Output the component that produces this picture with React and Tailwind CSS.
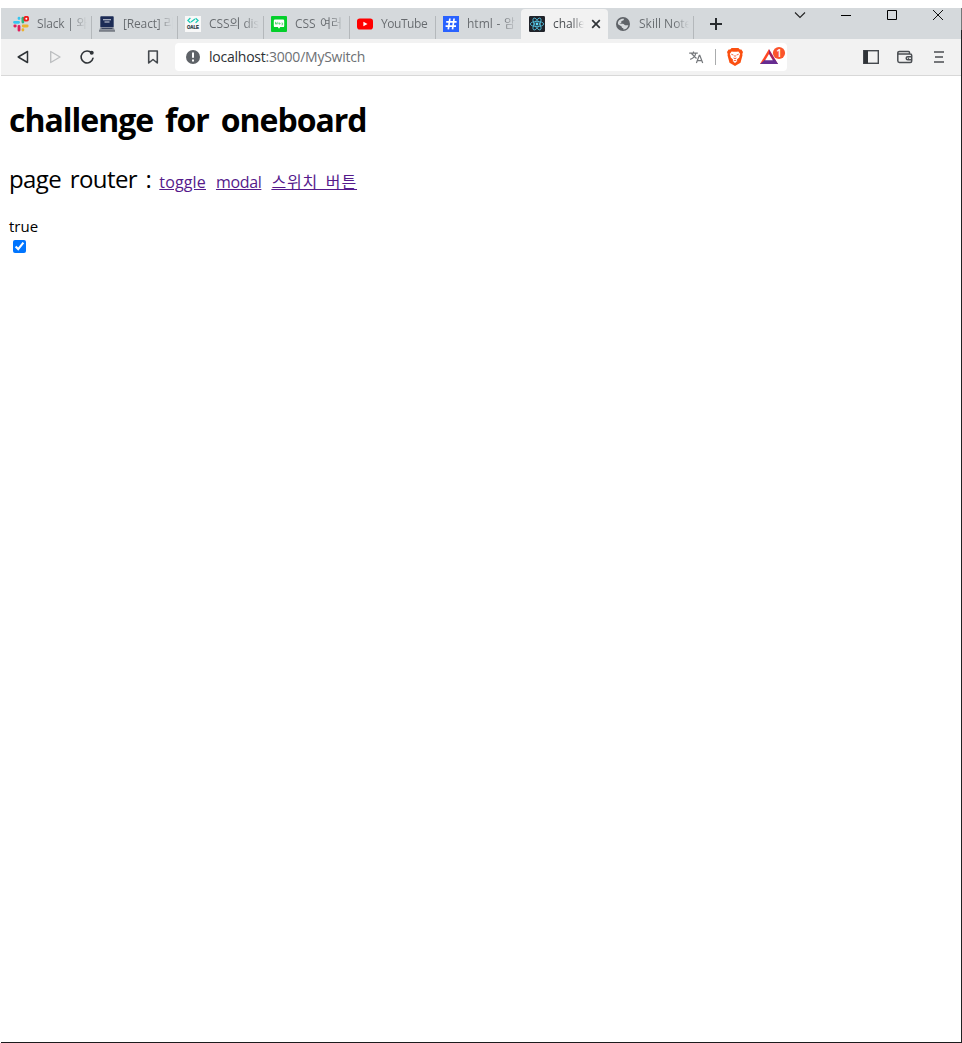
import React from "react";

function SlackIcon() {
  return (
    <svg className="block size-4" viewBox="0 0 16 16">
      <path d="M1.500 6.300H5.600M6 2.200v.4" stroke="#36c5f0" strokeWidth="2.800" strokeLinecap="round" />
      <path d="M9.900 2.200V6" stroke="#2eb67d" strokeWidth="2.800" strokeLinecap="round" />
      <path d="M10.200 10H14.200M9.900 13.700v.4" stroke="#ecb22e" strokeWidth="2.800" strokeLinecap="round" />
      <path d="M6 10.300V14.200M1.800 10h.5" stroke="#e01e5a" strokeWidth="2.800" strokeLinecap="round" />
      <circle cx="13.300" cy="2.700" r="2.900" fill="#ee1c1c" />
      <circle cx="13.300" cy="2.700" r="1" fill="#fff" />
    </svg>
  );
}

function LaptopIcon() {
  return (
    <svg className="block size-4" viewBox="0 0 16 16">
      <rect x="1.300" y="0.300" width="13.400" height="11.200" rx="0.800" fill="#1c2b55" />
      <path d="M4 3.800h8M5.500 6h5" stroke="#d5d9e4" strokeWidth="1.100" />
      <path d="M1.300 11.500h13.400L16 14.500H0z" fill="#8f949d" />
      <path d="M0 14.500h16v1H0z" fill="#414753" />
      <path d="M2.500 12.500h11" stroke="#3d465f" strokeWidth="1" />
    </svg>
  );
}

function OaleIcon() {
  return (
    <svg className="block size-4" viewBox="0 0 16 16">
      <rect width="16" height="16" fill="#f8f8f8" />
      <path d="M5.400 2 2.900 4.400l2.500 2.300M10.600 2.200l2.500 2.300-2.500 2.300M6 6l4-3" fill="none" stroke="#19c9b3" strokeWidth="1.200" />
      <text x="2" y="12.700" textLength="12" lengthAdjust="spacingAndGlyphs" fontFamily="Liberation Sans" fontWeight="700" fontSize="4.800" fill="#172d35" stroke="#172d35" strokeWidth=".2">OALE</text>
    </svg>
  );
}

function BlogIcon() {
  return (
    <svg className="block size-4" viewBox="0 0 16 16">
      <rect width="16" height="16" rx="1" fill="#04cf2b" />
      <path d="M4 3.500h8q1.200 0 1.200 1.200v5.200q0 1.200-1.200 1.200H9.200L8 12.700l-1.200-1.600H4q-1.200 0-1.200-1.200V4.700q0-1.200 1.200-1.200Z" fill="#fff" />
      <path d="M4.500 5.800v2.300h1.200V7H4.500M6.800 5.800v2.500M8 7h1.100v1.100H8zM10.400 7h1.200v1.900h-1.200" fill="none" stroke="#38cf59" strokeWidth=".7" />
    </svg>
  );
}

function YouTubeIcon() {
  return (
    <svg className="block size-4" viewBox="0 0 16 16">
      <rect y="2.400" width="16" height="11.200" rx="2.800" fill="#f00" />
      <path d="m6.400 5.700 4.100 2.300-4.100 2.300z" fill="#fff" />
    </svg>
  );
}

function HashIcon() {
  return (
    <svg className="block size-4" viewBox="0 0 16 16">
      <rect width="16" height="16" fill="#2962ff" />
      <path d="M6.900 2.500 5.300 13.300M11.100 2.500 9.500 13.300M3.200 5.800h10.400M2.600 10.100H13" stroke="#fff" strokeWidth="1.700" />
    </svg>
  );
}

function ReactIcon() {
  return (
    <svg className="block size-4" viewBox="0 0 16 16">
      <rect width="16" height="16" rx="1.200" fill="#20232a" />
      <g fill="none" stroke="#51bddb" strokeWidth=".85">
        <ellipse cx="8" cy="8" rx="6.700" ry="2.600" />
        <ellipse cx="8" cy="8" rx="6.700" ry="2.600" transform="rotate(60 8 8)" />
        <ellipse cx="8" cy="8" rx="6.700" ry="2.600" transform="rotate(120 8 8)" />
      </g>
      <circle cx="8" cy="8" r="1.400" fill="#61dafb" />
    </svg>
  );
}

function GlobeIcon() {
  return (
    <svg className="block size-4" viewBox="0 0 16 16">
      <circle cx="8" cy="8" r="7" fill="#5f6368" />
      <path d="M9 2.800c-.2 1.300-.5 1.800-1.700 2-1 .2-1 .8-1 1.700 0 .8-1.400.5-1.700 1.300h3.200c1.500 0 1.400 1.400 2.600 1.500h2.900c-.4 2.600-2.500 4.300-5 4.300v-1.500c-1.200 0-1.600-.7-1.600-1.700L3 8.200C2.500 4.800 5.300 2.300 9 2.800Z" fill="#d5d9dc" />
    </svg>
  );
}

const tabs = [
  { title: "Slack | 와", icon: SlackIcon, spacing: "tracking-[-0.2px]" },
  { title: "[React] 리", icon: LaptopIcon, spacing: "tracking-[-0.15px]" },
  { title: "CSS의 dis", icon: OaleIcon, spacing: "tracking-[-0.1px]" },
  { title: "CSS 여러", icon: BlogIcon, spacing: "tracking-[-0.1px] [word-spacing:1.5px]" },
  { title: "YouTube", icon: YouTubeIcon, spacing: "tracking-[-0.45px]", whole: true },
  { title: "html - 암", icon: HashIcon, spacing: "tracking-[0px] [word-spacing:0.6px]", beforeActive: true },
  { title: "challenge", icon: ReactIcon, active: true },
  { title: "Skill Note", icon: GlobeIcon, spacing: "tracking-[0px]" },
];

function Tab({ tab }) {
  const Icon = tab.icon;
  if (tab.active) {
    return (
      <div className="mt-px flex h-[30px] w-[87px] shrink-0 items-center rounded-t bg-[#f2f2f2] pl-2">
        <Icon />
        <span className="ml-2 w-[31px] overflow-hidden whitespace-nowrap bg-gradient-to-r from-[#45494d] from-60% to-[#f2f2f2] bg-clip-text text-[12px] leading-[18px] tracking-[-0.1px] text-transparent">{tab.title}</span>
        <svg className="ml-1 block size-4" viewBox="0 0 16 16"><path d="m4.200 4.200 7.600 7.600m0-7.600-7.600 7.600" stroke="#303438" strokeWidth="1.700" /></svg>
      </div>
    );
  }
  return (
    <div className={`flex h-[31px] shrink-0 items-center pl-[7px] ${tab.beforeActive ? "w-[85px]" : "w-[86px]"}`}>
      <Icon />
      <span className={`ml-2 w-[50px] overflow-hidden whitespace-nowrap bg-clip-text text-[12px] leading-[18px] text-transparent ${tab.spacing} ${tab.whole ? "bg-[#666a6e]" : "bg-gradient-to-r from-[#666a6e] from-70% to-[#d5d9dc]"}`}>{tab.title}</span>
      {!tab.beforeActive && <span className="ml-auto mt-2 h-[23px] w-px bg-[#b4b8bb]" />}
    </div>
  );
}

function TabStrip() {
  return (
    <div className="flex h-[31px] shrink-0 bg-[#d5d9dc] pl-[5px]">
      {tabs.map((tab) => <Tab key={tab.title} tab={tab} />)}
      <svg className="ml-3.5 mt-2 block size-4" viewBox="0 0 16 16"><path d="M8 2v12M2 8h12" stroke="#282c2f" strokeWidth="2" /></svg>
      <div className="ml-auto mr-[15px] flex gap-[30px]">
        <svg className="block size-4" viewBox="0 0 16 16"><path d="m3 4.500 5 5 5-5" fill="none" stroke="#222" strokeWidth="1.100" /></svg>
        <svg className="block size-4" viewBox="0 0 16 16"><path d="M3 7.500h10" stroke="#000" /></svg>
        <svg className="block size-4" viewBox="0 0 16 16"><path d="M3.500 2.500h9v9h-9z" fill="none" stroke="#000" /></svg>
        <svg className="block size-4" viewBox="0 0 16 16"><path d="m3 2 10 10m0-10L3 12" stroke="#111" /></svg>
      </div>
    </div>
  );
}

function LionIcon() {
  return (
    <svg className="block h-[18px] w-4" viewBox="0 0 16 18">
      <path d="M4.600 0h6.800l1.500 1.500 1.500-.1L16 4l-.7 2 .2 1.300-2 7.500L8 18l-5.500-3.200-2-7.500L.7 6 0 4l1.600-2.600 1.500.1z" fill="#fb4f10" />
      <path d="m4.600 3.500 1.800.3h3.200l1.800-.3 1.800 2.500-.8 2v1.200l-2.400 2.200.2 1.800L8 15l-2.200-1.800.2-1.800-2.400-2.200V8l-.8-2z" fill="#fff" />
      <path d="m4.300 6.200 2.200.9M11.700 6.200l-2.200.9M8 7v2.300M6.500 10l1.500.8 1.500-.8M6.500 13l1.500-.8 1.500.8" fill="none" stroke="#fb542b" strokeWidth=".9" />
    </svg>
  );
}

function RewardsIcon() {
  return (
    <svg className="block h-5 w-[26px]" viewBox="0 0 26 20">
      <path d="M9 3 0 18h5l4-7z" fill="#ff4724" />
      <path d="m9 3 9 15h-5L9 11z" fill="#9e1f63" />
      <path d="M0 18h18l-3-4.200H5z" fill="#662d91" />
      <path d="m9 8-3.800 6.200h7.600z" fill="#fff" />
      <circle cx="19" cy="7" r="6.100" fill="#fb542b" />
      <text x="19" y="10.700" textAnchor="middle" fontFamily="Open Sans" fontWeight="600" fontSize="10" fill="#fff">1</text>
    </svg>
  );
}

function Toolbar() {
  return (
    <div className="flex h-[37px] shrink-0 items-center border-b border-[#d8d8d8] bg-[#f2f2f2]">
      <svg className="ml-[14px] block size-4" viewBox="0 0 16 16"><path d="M12.500 2.500v11L3.200 8z" fill="none" stroke="#303438" strokeWidth="1.500" strokeLinejoin="round" /></svg>
      <svg className="ml-4 block size-4" viewBox="0 0 16 16"><path d="M3.700 2.500v11L13 8z" fill="none" stroke="#bdbfc1" strokeWidth="1.400" strokeLinejoin="round" /></svg>
      <svg className="ml-4 block size-4" viewBox="0 0 16 16"><path d="M12.700 4.100A6 6 0 1 0 14 9.200" fill="none" stroke="#303438" strokeWidth="1.600" strokeLinecap="round" /><circle cx="12.700" cy="3.800" r="2" fill="#303438" /></svg>
      <svg className="ml-[50px] block size-4" viewBox="0 0 16 16"><path d="M3.700 2h8.600v12L8 10.500 3.700 14z" fill="none" stroke="#45494e" strokeWidth="1.600" strokeLinejoin="round" /></svg>
      <div className="ml-[14px] flex h-7 w-[612px] items-center rounded bg-white">
        <svg className="ml-[10px] block size-4" viewBox="0 0 16 16"><circle cx="8" cy="8" r="7" fill="#5f6368" /><path d="M8 3.500v5.300m0 1.600v2" stroke="#fff" strokeWidth="2" /></svg>
        <span className="ml-2 whitespace-nowrap text-[14px] leading-5 tracking-[-0.23px] text-[#6d7074]"><span className="text-[#2c3034]">localhost</span>:3000/MySwitch</span>
        <svg className="ml-auto block size-4" viewBox="0 0 16 16">
          <path d="M1.200 4.200h8.600M5.500 2.500v1.700M3.500 4.500l5 5M7.700 4.500c-.5 2.700-2.300 4.800-5.500 5.900M8.400 14l2.900-7.600h.5l2.900 7.600m-5.400-2.300h4.500" fill="none" stroke="#74777b" strokeWidth="1.200" />
        </svg>
        <span className="ml-[11px] h-4 w-px bg-[#aaacad]" />
        <div className="ml-[11px]"><LionIcon /></div>
        <div className="mb-[2px] ml-[17px] mr-px"><RewardsIcon /></div>
      </div>
      <svg className="ml-[76px] block size-4" viewBox="0 0 16 16"><rect x=".7" y="1.700" width="14.600" height="12.600" fill="none" stroke="#45494e" strokeWidth="1.400" /><path d="M1 1.500h4v13H1z" fill="#303438" /></svg>
      <svg className="ml-[18px] block size-4" viewBox="0 0 16 16"><path d="M12.500 5V3.500q0-1-1-1h-9Q.8 2.500.8 4v7.700q0 1.700 1.700 1.700h10.700q1.500 0 1.500-1.500V6.500q0-1.500-1.500-1.500H2Q.8 5 .8 4M15 7.700h-4.200q-1.600 0-1.600 1.500t1.600 1.500H15" fill="none" stroke="#4b4f53" strokeWidth="1.500" /><circle cx="11.500" cy="9.200" r=".7" fill="#4b4f53" /></svg>
      <svg className="ml-[18px] block size-4" viewBox="0 0 16 16"><path d="M3 3h10M4 8h8M3 13h10" stroke="#4b4e52" strokeWidth="1.700" /></svg>
    </div>
  );
}

export default function App() {
  return (
    <div className="flex h-[1043px] w-[962px] flex-col bg-white pl-px pt-2 font-['Open_Sans','Noto_Sans_CJK_KR',sans-serif]">
      <div className="flex min-h-0 flex-1">
        <div className="flex min-w-0 flex-1 flex-col border-b border-[#1b1b1d]">
          <TabStrip />
          <Toolbar />
          <main className="flex flex-1 flex-col items-start pl-2 text-black">
            <h1 className="mt-[22px] whitespace-nowrap text-[32px] font-bold leading-[43px] tracking-[-1px] [word-spacing:4.5px]">challenge for oneboard</h1>
            <div className="mt-[22px] flex items-baseline whitespace-nowrap leading-8">
              <span className="text-[24px] tracking-[-0.6px] [word-spacing:3px]">page router :</span>
              <a className="ml-2 text-[16px] tracking-[0.15px] text-[#551a8b] underline">toggle</a>
              <a className="ml-2.5 text-[16px] tracking-[-0.35px] text-[#551a8b] underline">modal</a>
              <a className="ml-2.5 text-[16px] tracking-[0.9px] text-[#551a8b] underline [word-spacing:2.5px]">스위치 버튼</a>
            </div>
            <p className="mt-[18px] text-[15px] leading-[21px]">true</p>
            <input type="checkbox" defaultChecked className="ml-1 mt-[3px] block size-[13px] accent-[#0075ff]" />
          </main>
        </div>
        <div className="flex w-px flex-col">
          <div className="h-[22px] bg-[#747779]" />
          <div className="flex-1 bg-[#202224]" />
        </div>
      </div>
    </div>
  );
}
